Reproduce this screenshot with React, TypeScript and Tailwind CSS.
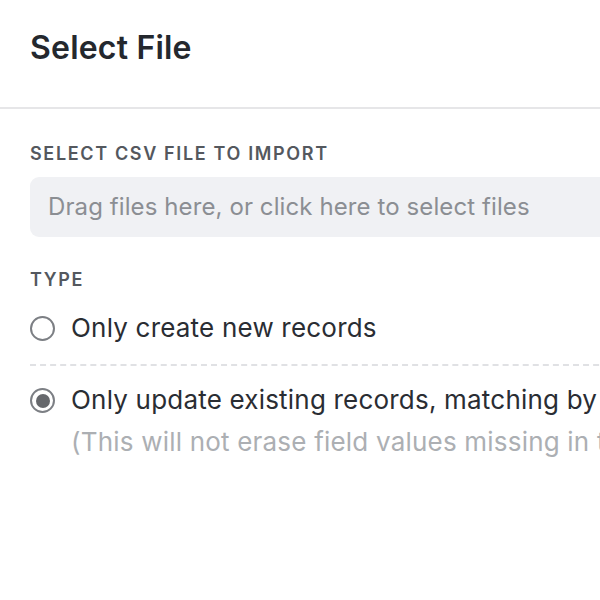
export default function App() {
  return (
    <div className="w-[600px] h-[600px] overflow-hidden bg-white font-['Inter','Noto_Sans',sans-serif]">
      {/* Header */}
      <div className="h-[109px] pl-[30px] pt-[28px] border-b-2 border-[#e6e6e8]">
        <h1 className="text-[32px] leading-[40px] font-semibold text-[#24282e] tracking-[0.2px]">Select File</h1>
      </div>

      <div className="pl-[30px] w-[760px]">
        {/* File picker */}
        <div className="pt-[34px] text-[18px] leading-[22px] font-semibold uppercase tracking-[1.65px] text-[#54585e]">
          Select CSV file to import
        </div>
        <div className="mt-[12px] h-[60px] rounded-[9px] bg-[#f0f1f4] pl-[18px] flex items-center text-[24px] tracking-[0.1px] text-[#8b8e93] whitespace-nowrap">
          Drag files here, or click here to select files
        </div>

        {/* Type */}
        <div className="pt-[32px] text-[18px] leading-[22px] font-semibold uppercase tracking-[1.65px] text-[#54585e]">
          Type
        </div>
        <label className="mt-[19px] flex items-center gap-[16px] h-[36px]">
          <span className="w-[25px] h-[25px] rounded-full border-2 border-[#7c7f84] bg-white shrink-0" />
          <span className="text-[26px] leading-[36px] tracking-[0.2px] text-[#2a2d33]">Only create new records</span>
        </label>
        <div className="mt-[18px] border-t-2 border-dashed border-[#e0e1e4]" />
        <label className="mt-[16px] flex items-start gap-[16px]">
          <span className="mt-[6px] w-[25px] h-[25px] rounded-full border-2 border-[#7c7f84] bg-white shrink-0 flex items-center justify-center">
            <span className="w-[14px] h-[14px] rounded-full bg-[#66686c]" />
          </span>
          <span className="flex flex-col">
            <span className="text-[26px] leading-[36px] tracking-[0.2px] text-[#2a2d33] whitespace-nowrap">Only update existing records, matching by</span>
            <span className="mt-[6px] text-[26px] leading-[36px] tracking-[0.2px] text-[#acafb3] whitespace-nowrap">(This will not erase field values missing in the file)</span>
          </span>
        </label>
      </div>
    </div>
  );
}
